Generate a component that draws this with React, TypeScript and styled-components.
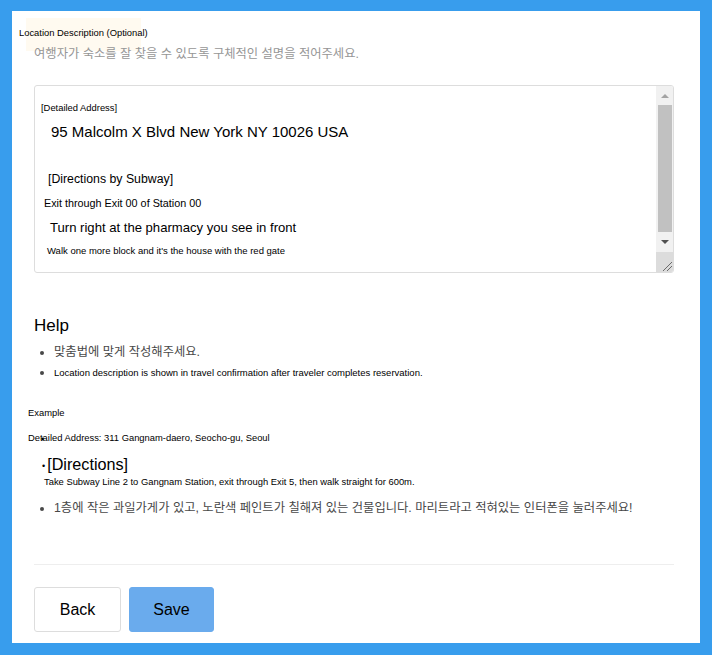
import React from 'react';
import styled, { createGlobalStyle } from 'styled-components';

const COLOR = {
  frame: '#389ded',
  white: '#ffffff',
  cream: '#fffaf0',
  border: '#dddddd',
  divider: '#eeeeee',
  gray: '#969696',
  text: '#000000',
  soft: '#484848',
  save: '#6aabed',
  track: '#f1f1f1',
  thumb: '#c1c1c1',
  arrowIdle: '#a3a3a3',
  arrowLive: '#505050',
  corner: '#dcdcdc'
};

const SANS = '"Liberation Sans", Arial, "Noto Sans CJK KR", sans-serif';

const GlobalStyle = createGlobalStyle`
  html, body {
    margin: 0;
    padding: 0;
    background: ${COLOR.frame};
  }
  body {
    font-family: ${SANS};
    color: ${COLOR.text};
  }
`;

const S = {
  Frame: styled.div`
    box-sizing: border-box;
    width: 712px;
    height: 655px;
    padding: 11px 12px 12px 12px;
    background: ${COLOR.frame};
  `,
  Panel: styled.div`
    box-sizing: border-box;
    display: flex;
    flex-direction: column;
    height: 632px;
    padding: 0 14px 0 22px;
    background: ${COLOR.white};
  `,
  LabelRow: styled.div`
    width: 115px;
    height: 33px;
    margin: 7px 0 0 -8px;
    background: ${COLOR.cream};
  `,
  Label: styled.div`
    margin: 9px 0 0 -7px;
    font-size: 9.4px;
    line-height: 12px;
    white-space: nowrap;
  `,
  Subtitle: styled.p`
    margin: -5px 0 0 0;
    font-size: 12.3px;
    line-height: 16px;
    color: ${COLOR.gray};
  `,
  Editor: styled.div`
    box-sizing: border-box;
    display: flex;
    width: 640px;
    height: 188px;
    margin-top: 23px;
    border: 1px solid ${COLOR.border};
    border-radius: 3px;
    overflow: hidden;
  `,
  EditorBody: styled.div`
    flex: 1;
    padding: 16px 0 0 5px;
    outline: none;
  `,
  Line: styled.div<{ $size: number; $indent: number; $gap: number }>`
    margin: ${(p) => p.$gap}px 0 0 ${(p) => p.$indent}px;
    font-size: ${(p) => p.$size}px;
    line-height: ${(p) => Math.round(p.$size * 1.2)}px;
  `,
  ScrollBar: styled.div`
    display: flex;
    flex-direction: column;
    width: 17px;
    background: ${COLOR.track};
  `,
  Arrow: styled.div<{ $down?: boolean }>`
    display: flex;
    align-items: center;
    justify-content: center;
    height: ${(p) => (p.$down ? 20 : 19)}px;

    &::after {
      content: '';
      border-left: 4px solid transparent;
      border-right: 4px solid transparent;
      ${(p) =>
        p.$down
          ? `border-top: 4px solid ${COLOR.arrowLive};`
          : `border-bottom: 4px solid ${COLOR.arrowIdle};`}
    }
  `,
  Thumb: styled.div`
    height: 127px;
    margin: 0 1px 0 2px;
    background: ${COLOR.thumb};
  `,
  Corner: styled.div`
    display: flex;
    align-items: flex-end;
    justify-content: flex-end;
    height: 20px;
    background: ${COLOR.corner};
  `,
  Heading: styled.h3`
    margin: 43px 0 0 0;
    font-size: 17px;
    line-height: 20px;
    font-weight: 400;
  `,
  List: styled.ul<{ $gap: number }>`
    margin: ${(p) => p.$gap}px 0 0 0;
    padding-left: 20px;
  `,
  Item: styled.li<{ $gap?: number }>`
    margin-top: ${(p) => p.$gap ?? 0}px;
    font-size: 12.3px;
    line-height: 16px;
    color: ${COLOR.soft};
  `,
  Small: styled.span`
    font-size: 9.5px;
    color: ${COLOR.text};
  `,
  Note: styled.div<{ $gap: number; $indent?: number }>`
    position: relative;
    margin: ${(p) => p.$gap}px 0 0 ${(p) => p.$indent ?? -6}px;
    font-size: 9.4px;
    line-height: 11px;
    white-space: nowrap;
  `,
  StrayDot: styled.span`
    position: absolute;
    left: 13px;
    top: 2px;
    font-size: 9px;
    line-height: 11px;
  `,
  Directions: styled.div`
    display: flex;
    align-items: center;
    gap: 2px;
    margin: 11px 0 0 8px;
    font-size: 16.2px;
    line-height: 20px;
  `,
  Bullet: styled.span`
    font-size: 9px;
    line-height: 11px;
    margin-top: 4px;
  `,
  Divider: styled.hr`
    width: 640px;
    margin: 48px 0 0 0;
    border: none;
    border-top: 1px solid ${COLOR.divider};
  `,
  Actions: styled.div`
    display: flex;
    gap: 8px;
    margin-top: 22px;
  `,
  Button: styled.button<{ $primary?: boolean }>`
    box-sizing: border-box;
    width: ${(p) => (p.$primary ? 85 : 87)}px;
    height: 45px;
    border: 1px solid ${(p) => (p.$primary ? COLOR.save : COLOR.border)};
    border-radius: 3px;
    background: ${(p) => (p.$primary ? COLOR.save : COLOR.white)};
    font-family: ${SANS};
    font-size: 16px;
    color: ${COLOR.text};
    cursor: pointer;
  `
};

// resize grip drawn in the bottom-right corner of the editor
const ResizeGrip = () => (
  <svg width="12" height="12" viewBox="0 0 12 12">
    <path d="M2 11 L11 2 M6 11 L11 6" stroke="#6b6b6b" strokeWidth="1" fill="none" />
  </svg>
);

const App = () => {
  return (
    <>
      <GlobalStyle />
      <S.Frame>
        <S.Panel>
          <S.LabelRow>
            <S.Label>Location Description (Optional)</S.Label>
          </S.LabelRow>
          <S.Subtitle>여행자가 숙소를 잘 찾을 수 있도록 구체적인 설명을 적어주세요.</S.Subtitle>

          <S.Editor>
            <S.EditorBody contentEditable suppressContentEditableWarning>
              <S.Line $size={9.4} $indent={1} $gap={0}>[Detailed Address]</S.Line>
              <S.Line $size={15} $indent={11} $gap={10}>95 Malcolm X Blvd New York NY 10026 USA</S.Line>
              <S.Line $size={12.3} $indent={8} $gap={31}>[Directions by Subway]</S.Line>
              <S.Line $size={10.8} $indent={4} $gap={10}>Exit through Exit 00 of Station 00</S.Line>
              <S.Line $size={13.1} $indent={10} $gap={10}>Turn right at the pharmacy you see in front</S.Line>
              <S.Line $size={9.5} $indent={7} $gap={9}>Walk one more block and it's the house with the red gate</S.Line>
            </S.EditorBody>
            <S.ScrollBar>
              <S.Arrow />
              <S.Thumb />
              <S.Arrow $down />
              <S.Corner>
                <ResizeGrip />
              </S.Corner>
            </S.ScrollBar>
          </S.Editor>

          <S.Heading>Help</S.Heading>
          <S.List $gap={8}>
            <S.Item>맞춤법에 맞게 작성해주세요.</S.Item>
            <S.Item $gap={4}>
              <S.Small>Location description is shown in travel confirmation after traveler completes reservation.</S.Small>
            </S.Item>
          </S.List>

          <S.Note $gap={26}>Example</S.Note>
          <S.Note $gap={14}>
            Detailed Address: 311 Gangnam-daero, Seocho-gu, Seoul
            <S.StrayDot>•</S.StrayDot>
          </S.Note>
          <S.Directions>
            <S.Bullet>•</S.Bullet>
            [Directions]
          </S.Directions>
          <S.Note $gap={2} $indent={10}>
            Take Subway Line 2 to Gangnam Station, exit through Exit 5, then walk straight for 600m.
          </S.Note>
          <S.List $gap={13}>
            <S.Item>1층에 작은 과일가게가 있고, 노란색 페인트가 칠해져 있는 건물입니다. 마리트라고 적혀있는 인터폰을 눌러주세요!</S.Item>
          </S.List>

          <S.Divider />
          <S.Actions>
            <S.Button type="button">Back</S.Button>
            <S.Button type="button" $primary>Save</S.Button>
          </S.Actions>
        </S.Panel>
      </S.Frame>
    </>
  );
};

export default App;
